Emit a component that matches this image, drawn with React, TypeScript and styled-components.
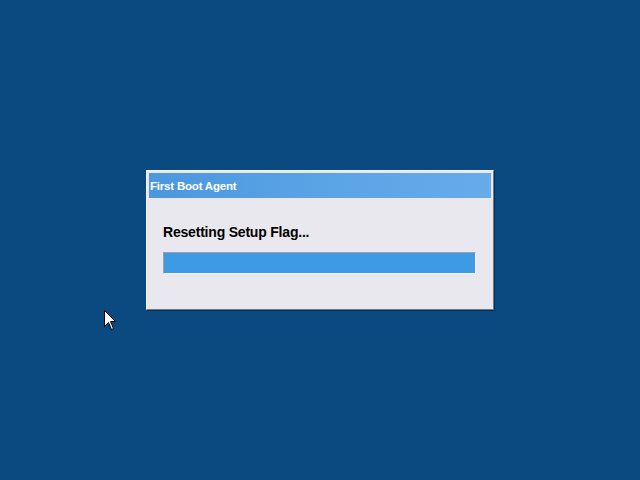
import styled, { createGlobalStyle } from "styled-components";

const Global = createGlobalStyle`
  html, body {
    margin: 0;
    padding: 0;
    height: 100%;
  }
  #root {
    height: 100%;
  }
`;

const Desktop = styled.div`
  position: relative;
  width: 640px;
  height: 480px;
  background: #0b4a80;
  display: flex;
  align-items: center;
  justify-content: center;
  overflow: hidden;
  font-family: "Liberation Sans", Arial, sans-serif;
`;

const Window = styled.div`
  width: 348px;
  height: 140px;
  box-sizing: border-box;
  background: #e9e8ee;
  border-top: 1px solid #f4f4f8;
  border-left: 1px solid #f4f4f8;
  border-right: 1px solid #6c7a8c;
  border-bottom: 1px solid #6c7a8c;
  box-shadow: 1px 1px 0 #0a2f55;
  padding: 2px;
  display: flex;
  flex-direction: column;
`;

const TitleBar = styled.div`
  height: 25px;
  display: flex;
  align-items: center;
  padding-left: 1px;
  background: linear-gradient(90deg, #4b97df 0%, #5aa3e5 50%, #66aceb 100%);
  color: #ffffff;
  font-size: 11.5px;
  font-weight: bold;
  letter-spacing: -0.2px;
`;

const Body = styled.div`
  flex: 1;
  padding: 26px 15px 0 14px;
  display: flex;
  flex-direction: column;
`;

const Message = styled.div`
  font-size: 14px;
  font-weight: bold;
  color: #000000;
  height: 17px;
  line-height: 17px;
  letter-spacing: -0.2px;
`;

const Progress = styled.div`
  margin-top: 11px;
  height: 22px;
  box-sizing: border-box;
  border: 1px solid #9aa3ad;
  border-bottom-color: #f6f6f8;
  border-right-color: #f6f6f8;
  background: #3f9ae4;
`;

const Cursor = styled.svg`
  position: absolute;
  left: 104px;
  top: 310px;
`;

export default function App() {
  return (
    <>
      <Global />
      <Desktop>
        <Window>
          <TitleBar>First Boot Agent</TitleBar>
          <Body>
            <Message>Resetting Setup Flag...</Message>
            <Progress />
          </Body>
        </Window>
        <Cursor width="13" height="21" viewBox="0 0 13 21">
          <path
            d="M0.5 0.5 L0.5 16.5 L4.5 12.5 L7.5 19.5 L9.5 18.5 L6.5 11.5 L11.5 11.5 Z"
            fill="#ffffff"
            stroke="#000000"
            strokeWidth="1"
          />
        </Cursor>
      </Desktop>
    </>
  );
}
